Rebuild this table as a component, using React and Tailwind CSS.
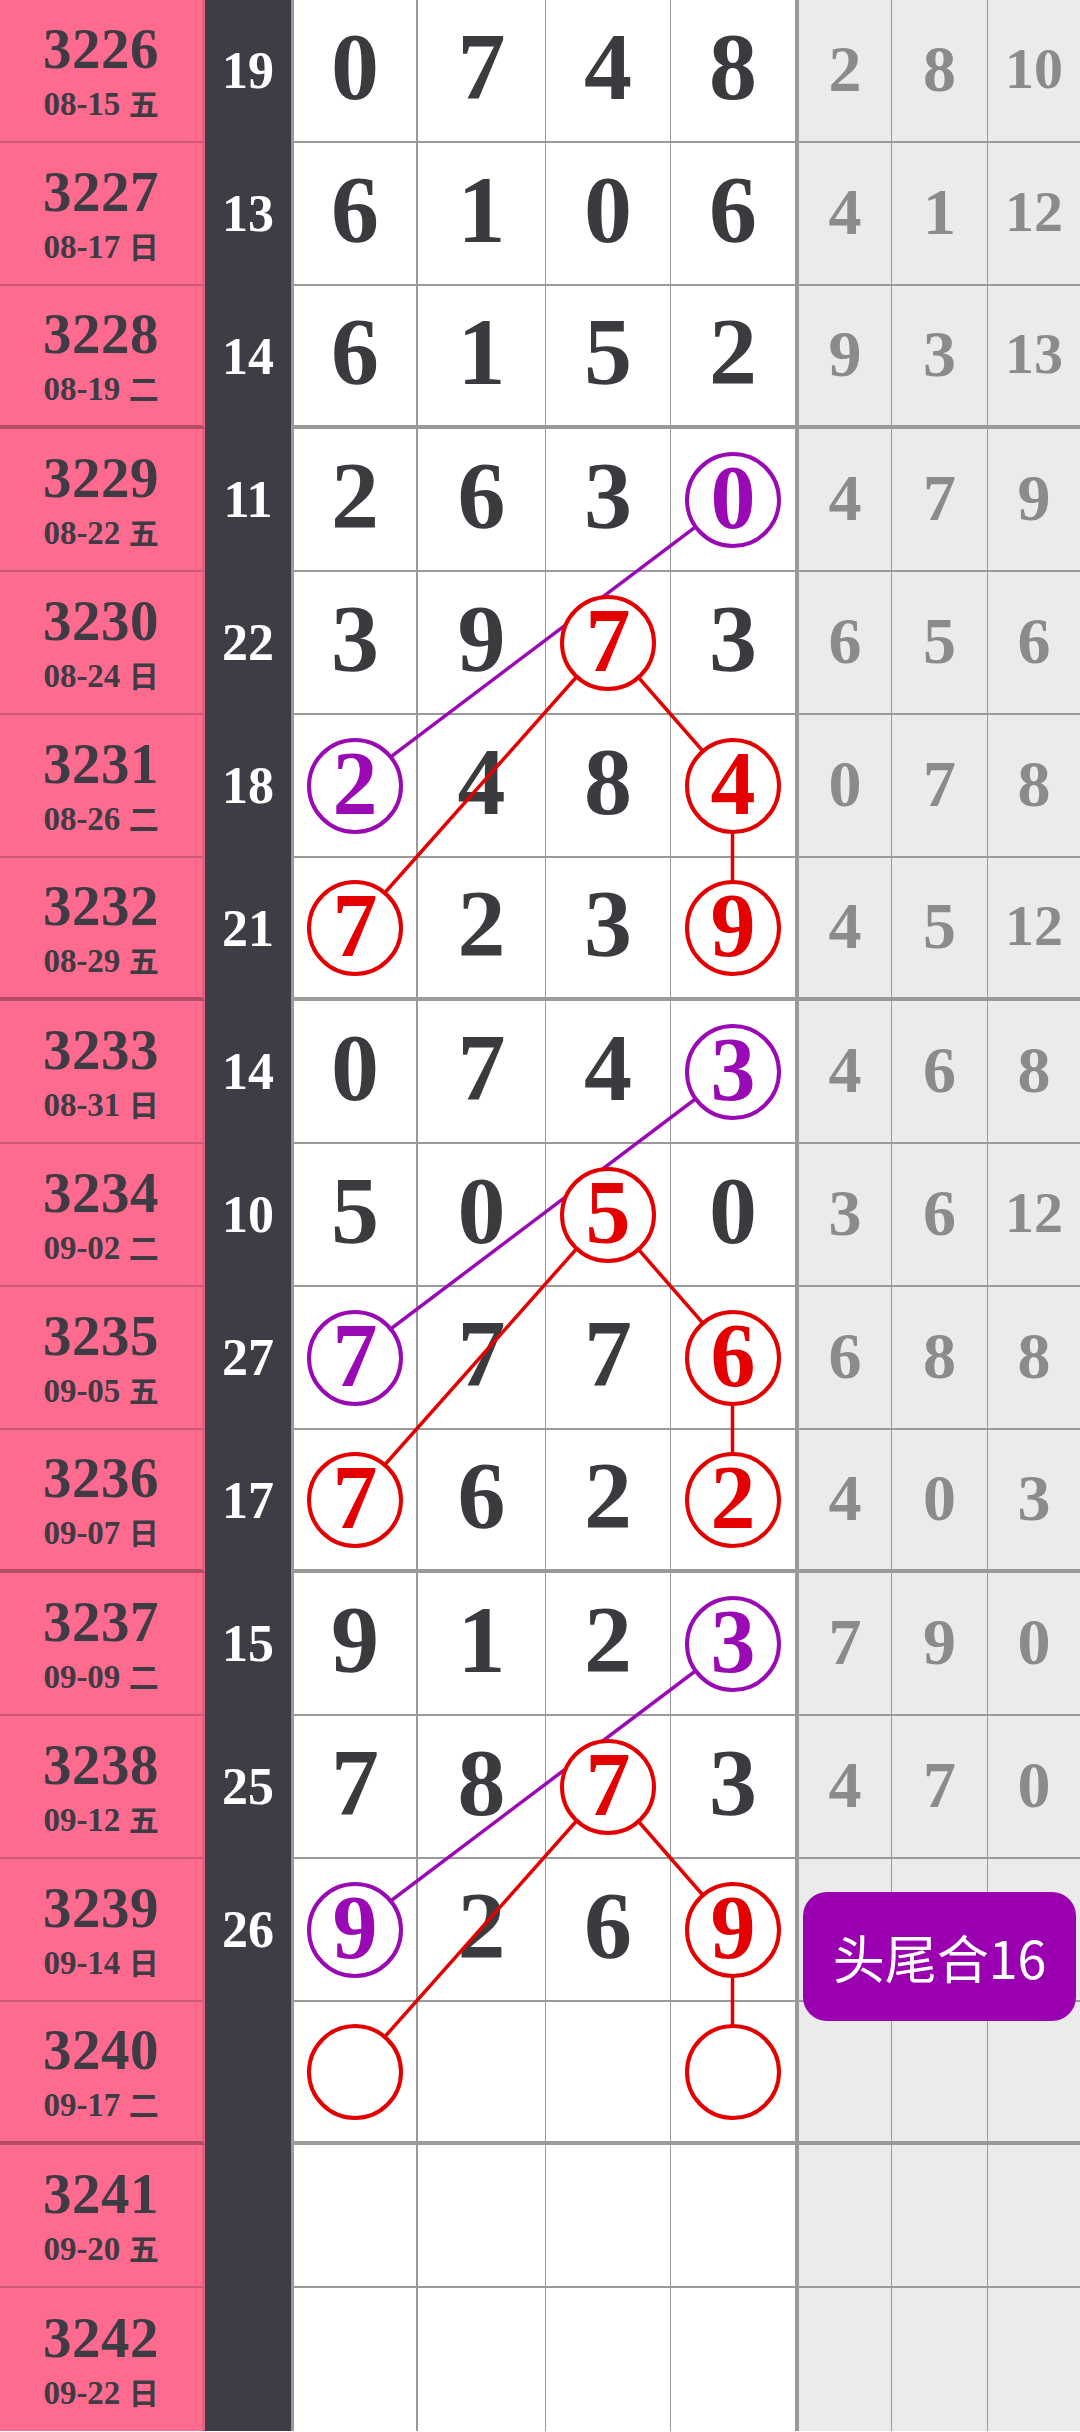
import React from 'react';

const rows = [
  { no: '3226', date: '08-15', wd: '五', sum: 19, d: [0, 7, 4, 8], g: [2, 8, 10] },
  { no: '3227', date: '08-17', wd: '日', sum: 13, d: [6, 1, 0, 6], g: [4, 1, 12] },
  { no: '3228', date: '08-19', wd: '二', sum: 14, d: [6, 1, 5, 2], g: [9, 3, 13] },
  { no: '3229', date: '08-22', wd: '五', sum: 11, d: [2, 6, 3, 0], g: [4, 7, 9], c: { 3: 'p' } },
  { no: '3230', date: '08-24', wd: '日', sum: 22, d: [3, 9, 7, 3], g: [6, 5, 6], c: { 2: 'r' } },
  { no: '3231', date: '08-26', wd: '二', sum: 18, d: [2, 4, 8, 4], g: [0, 7, 8], c: { 0: 'p', 3: 'r' } },
  { no: '3232', date: '08-29', wd: '五', sum: 21, d: [7, 2, 3, 9], g: [4, 5, 12], c: { 0: 'r', 3: 'r' } },
  { no: '3233', date: '08-31', wd: '日', sum: 14, d: [0, 7, 4, 3], g: [4, 6, 8], c: { 3: 'p' } },
  { no: '3234', date: '09-02', wd: '二', sum: 10, d: [5, 0, 5, 0], g: [3, 6, 12], c: { 2: 'r' } },
  { no: '3235', date: '09-05', wd: '五', sum: 27, d: [7, 7, 7, 6], g: [6, 8, 8], c: { 0: 'p', 3: 'r' } },
  { no: '3236', date: '09-07', wd: '日', sum: 17, d: [7, 6, 2, 2], g: [4, 0, 3], c: { 0: 'r', 3: 'r' } },
  { no: '3237', date: '09-09', wd: '二', sum: 15, d: [9, 1, 2, 3], g: [7, 9, 0], c: { 3: 'p' } },
  { no: '3238', date: '09-12', wd: '五', sum: 25, d: [7, 8, 7, 3], g: [4, 7, 0], c: { 2: 'r' } },
  { no: '3239', date: '09-14', wd: '日', sum: 26, d: [9, 2, 6, 9], g: [null, null, null], c: { 0: 'p', 3: 'r' } },
  { no: '3240', date: '09-17', wd: '二', sum: null, d: ['', null, null, ''], g: [null, null, null], c: { 0: 'r', 3: 'r' } },
  { no: '3241', date: '09-20', wd: '五', sum: null, d: [null, null, null, null], g: [null, null, null] },
  { no: '3242', date: '09-22', wd: '日', sum: null, d: [null, null, null, null], g: [null, null, null] },
];

const ROW_H = 143;
const colX = [353.5, 481, 607.5, 732.5];
const cy = (i) => i * ROW_H + 70;

// line segments per group (start rows 3, 7, 11)
const segs = [];
[3, 7, 11].forEach((s) => {
  segs.push({ c: '#9a0ab4', a: [3, s], b: [0, s + 2] });
  segs.push({ c: '#e40000', a: [2, s + 1], b: [0, s + 3] });
  segs.push({ c: '#e40000', a: [2, s + 1], b: [3, s + 2] });
  segs.push({ c: '#e40000', a: [3, s + 2], b: [3, s + 3] });
});

const serif = { fontFamily: '"Liberation Serif", "Noto Sans CJK SC", serif' };

const digitBorders = [
  'w-[125px] border-l-[3px]',
  'w-[129px] border-l-2',
  'w-[125px] border-l',
  'w-[125px] border-l',
];
const grayBorders = ['w-[96px] border-l-4', 'w-[96px] border-l', 'flex-1 border-l'];

const Circle = ({ kind, v }) => {
  const purple = kind === 'p';
  return (
    <div
      className={`relative z-20 w-[96px] h-[96px] rounded-full border-[4px] bg-white flex items-center justify-center ${
        purple ? 'border-[#9a0ab4] text-[#9a0ab4]' : 'border-[#e40000] text-[#e40000]'
      }`}
    >
      <span className="text-[90px] font-bold leading-none pb-[4px]">{v}</span>
    </div>
  );
};

export default function App() {
  return (
    <div className="relative isolate w-[1080px] h-[2432px] overflow-hidden bg-white" style={serif}>
      {rows.map((r, i) => {
        const thick = i % 4 === 2;
        const last = i === rows.length - 1;
        const bb = last ? '' : thick ? 'border-b-4' : 'border-b-2';
        return (
          <div key={r.no} className="flex h-[143px]">
            <div
              className={`w-[205px] bg-[#ff6b8f] border-r-[3px] border-r-[#e2607f] ${bb} ${
                thick ? 'border-b-[#b34d66]' : 'border-b-[#c95a75]'
              } flex flex-col items-center justify-center gap-[11px] text-[#3e3b45] font-bold`}
            >
              <div className="text-[57px] leading-none tracking-[0.5px]">{r.no}</div>
              <div className="text-[33px] leading-none">
                {r.date} <span className="text-[30px]">{r.wd}</span>
              </div>
            </div>
            <div className="w-[86px] bg-[#3e3d46] flex items-center justify-center text-white font-bold text-[52px] leading-none pb-[2px]">
              {r.sum}
            </div>
            {r.d.map((v, j) => (
              <div
                key={j}
                className={`${digitBorders[j]} ${bb} border-[#9a9a9a] bg-white flex items-center justify-center`}
              >
                {r.c && r.c[j] ? (
                  <Circle kind={r.c[j]} v={v} />
                ) : (
                  <span className="text-[96px] font-bold leading-none text-[#3b3b3f] pb-[8px]">{v}</span>
                )}
              </div>
            ))}
            {r.g.map((v, j) => (
              <div
                key={j}
                className={`${grayBorders[j]} ${bb} border-[#9a9a9a] bg-[#ebebeb] flex items-center justify-center`}
              >
                {v !== null && (
                  <span
                    className={`${v >= 10 ? 'text-[58px]' : 'text-[66px]'} font-bold leading-none text-[#8b8b8b] pb-[4px]`}
                  >
                    {v}
                  </span>
                )}
              </div>
            ))}
          </div>
        );
      })}

      <svg className="absolute inset-0 z-10 pointer-events-none" width="1080" height="2432" viewBox="0 0 1080 2432">
        {segs.map((s, k) => (
          <line
            key={k}
            x1={colX[s.a[0]]}
            y1={cy(s.a[1])}
            x2={colX[s.b[0]]}
            y2={cy(s.b[1])}
            stroke={s.c}
            strokeWidth="3.5"
          />
        ))}
      </svg>

      <div
        className="absolute z-30 left-[803px] top-[1892px] w-[273px] h-[129px] rounded-[24px] bg-[#9b00b0] flex items-center justify-center text-white text-[52px] leading-none"
        style={{ fontFamily: '"Noto Sans CJK SC", "Noto Sans", sans-serif' }}
      >
        头尾合16
      </div>
    </div>
  );
}
